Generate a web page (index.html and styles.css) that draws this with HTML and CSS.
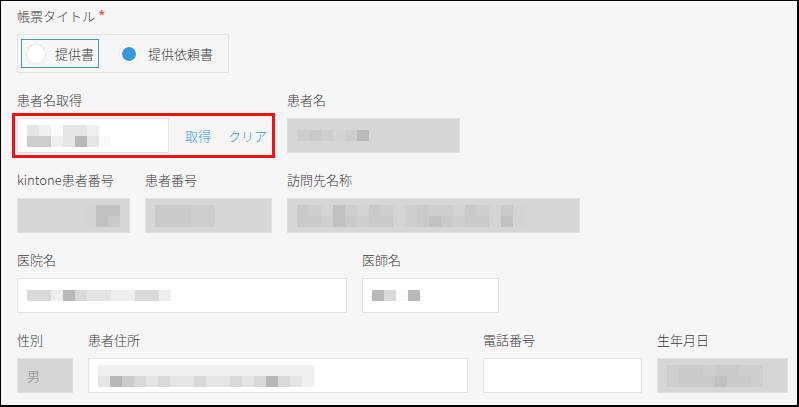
FILE: index.html
```html
<!DOCTYPE html>
<html lang="ja">
<head>
<meta charset="utf-8">
<title>帳票</title>
<link rel="stylesheet" href="styles.css">
</head>
<body>
<div class="form">
  <div class="row">
    <div class="col">
      <div class="label">帳票タイトル <span class="req">*</span></div>
      <div class="radio-group">
        <label class="radio-item focused"><span class="radio"></span><span>提供書</span></label>
        <label class="radio-item"><span class="radio checked"></span><span>提供依頼書</span></label>
      </div>
    </div>
  </div>

  <div class="row">
    <div class="col w255">
      <div class="label">患者名取得</div>
      <div class="lookup">
        <div class="field input w152">
          <div class="mosaic">
            <div class="mrow"><i class="b s2"></i><i class="b s1"></i><i class="b s0"></i><i class="b s2"></i><i class="b s2"></i><i class="b s1"></i></div>
            <div class="mrow"><i class="b s4"></i><i class="b s4"></i><i class="b s1"></i><i class="b s2"></i><i class="b s5"></i><i class="b s2"></i><i class="b s0"></i></div>
          </div>
        </div>
        <a class="link">取得</a>
        <a class="link">クリア</a>
      </div>
    </div>
    <div class="col w173">
      <div class="label">患者名</div>
      <div class="field disabled">
        <div class="mosaic">
          <div class="mrow"><i class="b g1"></i><i class="b g2"></i><i class="b g1"></i><i class="b g0"></i><i class="b g1"></i><i class="b g4"></i></div>
        </div>
      </div>
    </div>
  </div>

  <div class="row">
    <div class="col w113">
      <div class="label">kintone患者番号</div>
      <div class="field disabled end">
        <div class="mosaic">
          <div class="mrow"><i class="b g0"></i><i class="b g3"></i><i class="b g3"></i></div>
          <div class="mrow"><i class="b g0"></i><i class="b g3"></i><i class="b g2"></i></div>
        </div>
      </div>
    </div>
    <div class="col w127">
      <div class="label">患者番号</div>
      <div class="field disabled">
        <div class="mosaic">
          <div class="mrow"><i class="b g2"></i><i class="b g2"></i><i class="b g2"></i><i class="b g1"></i><i class="b g1"></i></div>
          <div class="mrow"><i class="b g2"></i><i class="b g2"></i><i class="b g2"></i><i class="b g1"></i><i class="b g1"></i></div>
        </div>
      </div>
    </div>
    <div class="col w293">
      <div class="label">訪問先名称</div>
      <div class="field disabled">
        <div class="mosaic">
          <div class="mrow"><i class="b g2"></i><i class="b g1"></i><i class="b g0"></i><i class="b g3"></i><i class="b g1"></i><i class="b g0"></i><i class="b g2"></i><i class="b g1"></i><i class="b g0"></i><i class="b g1"></i><i class="b g2"></i><i class="b g1"></i><i class="b g1"></i><i class="b g0"></i><i class="b g2"></i><i class="b g1"></i><i class="b g0"></i><i class="b g2"></i><i class="b g0"></i></div>
          <div class="mrow"><i class="b g2"></i><i class="b g2"></i><i class="b g1"></i><i class="b g3"></i><i class="b g2"></i><i class="b g1"></i><i class="b g2"></i><i class="b g2"></i><i class="b g0"></i><i class="b g1"></i><i class="b g2"></i><i class="b g3"></i><i class="b g2"></i><i class="b g1"></i><i class="b g2"></i><i class="b g2"></i><i class="b g0"></i><i class="b g3"></i><i class="b g0"></i></div>
        </div>
      </div>
    </div>
  </div>

  <div class="row">
    <div class="col w330">
      <div class="label">医院名</div>
      <div class="field input">
        <div class="mosaic">
          <div class="mrow"><i class="b s3"></i><i class="b s3"></i><i class="b s1"></i><i class="b s5"></i><i class="b s3"></i><i class="b s2"></i><i class="b s2"></i><i class="b s1"></i><i class="b s1"></i><i class="b s3"></i><i class="b s3"></i><i class="b s1"></i></div>
        </div>
      </div>
    </div>
    <div class="col w137">
      <div class="label">医師名</div>
      <div class="field input">
        <div class="mosaic">
          <div class="mrow"><i class="b s5"></i><i class="b s3"></i><i class="b s0"></i><i class="b s5"></i></div>
        </div>
      </div>
    </div>
  </div>

  <div class="row">
    <div class="col w56">
      <div class="label">性別</div>
      <div class="field disabled"><span class="value">男</span></div>
    </div>
    <div class="col w380">
      <div class="label">患者住所</div>
      <div class="field input">
        <div class="mosaic">
          <div class="mrow"><i class="b s1"></i><i class="b s1"></i><i class="b s1"></i><i class="b s1"></i><i class="b s1"></i><i class="b s1"></i><i class="b s1"></i><i class="b s1"></i><i class="b s1"></i><i class="b s1"></i><i class="b s1"></i><i class="b s1"></i><i class="b s1"></i><i class="b s1"></i><i class="b s1"></i><i class="b s1"></i><i class="b s1"></i><i class="b s1"></i></div>
          <div class="mrow"><i class="b s2"></i><i class="b s5"></i><i class="b s4"></i><i class="b s3"></i><i class="b s2"></i><i class="b s3"></i><i class="b s2"></i><i class="b s2"></i><i class="b s3"></i><i class="b s2"></i><i class="b s2"></i><i class="b s3"></i><i class="b s2"></i><i class="b s3"></i><i class="b s5"></i><i class="b s3"></i><i class="b s2"></i><i class="b s1"></i></div>
        </div>
      </div>
    </div>
    <div class="col w159">
      <div class="label">電話番号</div>
      <div class="field input"></div>
    </div>
    <div class="col w131">
      <div class="label">生年月日</div>
      <div class="field disabled">
        <div class="mosaic">
          <div class="mrow"><i class="b g1"></i><i class="b g2"></i><i class="b g2"></i><i class="b g1"></i><i class="b g2"></i><i class="b g2"></i><i class="b g1"></i><i class="b g1"></i></div>
          <div class="mrow"><i class="b g1"></i><i class="b g2"></i><i class="b g2"></i><i class="b g2"></i><i class="b g3"></i><i class="b g2"></i><i class="b g2"></i><i class="b g1"></i></div>
        </div>
      </div>
    </div>
  </div>
</div>
</body>
</html>
```

FILE: styles.css
```css
html, body {
  margin: 0;
  padding: 0;
}
body {
  width: 799px;
  height: 407px;
  box-sizing: border-box;
  border-style: solid;
  border-color: #000;
  border-width: 1px 2px 2px 1px;
  background: #f6f6f6;
  overflow: hidden;
  font-family: "Noto Sans CJK JP", "Noto Sans", sans-serif;
  font-size: 13px;
  font-weight: 300;
  color: #3c3c3c;
}
.form {
  padding: 5px 0 0 16px;
}
.row {
  display: flex;
  gap: 15px;
  margin-bottom: 17px;
}
.col {
  display: flex;
  flex-direction: column;
  gap: 8px;
  flex: none;
}
.label {
  height: 20px;
  line-height: 20px;
  white-space: nowrap;
}
.req {
  color: #e74c3c;
  font-size: 16px;
  font-weight: 400;
  line-height: 0;
  vertical-align: -2px;
}

/* radio */
.radio-group {
  width: 212px;
  height: 39px;
  box-sizing: border-box;
  border: 1px solid #e4e4e4;
  padding: 4px 3px;
  display: flex;
  gap: 15px;
}
.radio-item {
  display: flex;
  align-items: center;
  gap: 10px;
  height: 29px;
  box-sizing: border-box;
  padding: 0 4px 0 5px;
  border: 1px solid transparent;
}
.radio-item.focused {
  border-color: #4a94a6;
}
.radio {
  width: 18px;
  height: 18px;
  border-radius: 50%;
  box-sizing: border-box;
  background: #fff;
  box-shadow: 0 0 1px 1px #e6e6e6;
  flex: none;
}
.radio.checked {
  background: #3498db;
  border: 2px solid #fff;
  box-shadow: 0 0 1px 1px #ececec;
}

/* fields */
.field {
  height: 35px;
  box-sizing: border-box;
  display: flex;
  align-items: center;
  padding: 0 9px;
}
.field.input {
  background: #fff;
  border: 1px solid #e3e3e3;
}
.field.disabled {
  background: #d5d6d6;
  border: 1px solid #e0e0e0;
}
.field.end {
  justify-content: flex-end;
}
.value {
  color: #888;
}

.lookup {
  display: flex;
  align-items: center;
  width: 253px;
  height: 35px;
  outline: 3px solid #e8141c;
  outline-offset: 2px;
}
.link {
  color: #3498db;
  margin-left: 16px;
  cursor: pointer;
}
.link + .link {
  margin-left: 17px;
}

/* widths */
.w56 { width: 56px; }
.w113 { width: 113px; }
.w127 { width: 127px; }
.w131 { width: 131px; }
.w137 { width: 137px; }
.w152 { width: 152px; flex: none; }
.w159 { width: 159px; }
.w173 { width: 173px; }
.w255 { width: 255px; }
.w293 { width: 293px; }
.w330 { width: 330px; }
.w380 { width: 380px; }

/* pixelated placeholder */
.mosaic {
  display: flex;
  flex-direction: column;
}
.mrow {
  display: flex;
}
.b {
  display: block;
  width: 12px;
  height: 11px;
}
.s0 { background: #fafafa; }
.s1 { background: #efefef; }
.s2 { background: #e5e5e5; }
.s3 { background: #d9d9d9; }
.s4 { background: #cccccc; }
.s5 { background: #b8b8b8; }
.g0 { background: #d3d4d4; }
.g1 { background: #cdcece; }
.g2 { background: #c8c9c9; }
.g3 { background: #c0c1c1; }
.g4 { background: #b9baba; }
```
